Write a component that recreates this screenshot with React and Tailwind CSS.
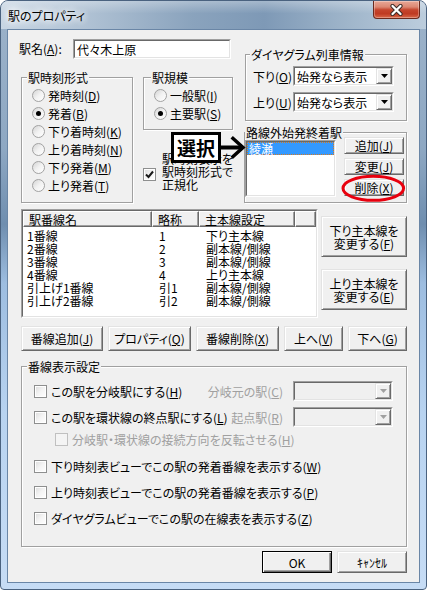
import React from "react";

const RAISED =
  "border border-t-[#e3e3e3] border-l-[#e3e3e3] border-r-[#696969] border-b-[#696969] shadow-[inset_1px_1px_0_#ffffff,inset_-1px_-1px_0_#a0a0a0]";
const DEFAULT_BTN =
  "border border-black shadow-[inset_1px_1px_0_#ffffff,inset_-1px_-1px_0_#696969,inset_-2px_-2px_0_#a0a0a0]";
const HDR =
  "flex items-center bg-[#f0f0f0] border border-t-white border-l-white border-r-[#696969] border-b-[#696969] shadow-[inset_-1px_-1px_0_#a0a0a0] whitespace-nowrap overflow-hidden";

function U({ children }) {
  return <span className="underline underline-offset-[1px]">{children}</span>;
}

function Button({ children, className = "", isDefault = false }) {
  return (
    <div
      className={`flex shrink-0 items-center justify-center bg-[#f0f0f0] text-center text-[12px] leading-[13px] whitespace-nowrap ${
        isDefault ? DEFAULT_BTN : RAISED
      } ${className}`}
    >
      <div>{children}</div>
    </div>
  );
}

function Sunken({ className = "", inner = "", children }) {
  return (
    <div
      className={`shrink-0 border border-t-[#a0a0a0] border-l-[#a0a0a0] border-r-white border-b-white ${className}`}
    >
      <div
        className={`h-full w-full border border-t-[#696969] border-l-[#696969] border-r-[#e3e3e3] border-b-[#e3e3e3] ${inner}`}
      >
        {children}
      </div>
    </div>
  );
}

function Combo({ text = "", disabled = false, className = "" }) {
  return (
    <Sunken
      className={`h-[20px] ${className}`}
      inner={`flex ${disabled ? "bg-[#f0f0f0]" : "bg-white"}`}
    >
      <div className="flex flex-1 items-center overflow-hidden whitespace-nowrap pl-[2px] text-[12px] leading-[13px]">
        {text}
      </div>
      <div className={`flex w-[16px] items-center justify-center bg-[#f0f0f0] ${RAISED}`}>
        <svg width="7" height="4" viewBox="0 0 7 4">
          <path d="M0 0H7L3.5 4Z" fill={disabled ? "#a0a0a0" : "#000000"} />
        </svg>
      </div>
    </Sunken>
  );
}

function Check({ checked = false, disabled = false }) {
  return (
    <div
      className={`flex h-[13px] w-[13px] shrink-0 items-center justify-center border ${
        disabled
          ? "border-[#c0c0c0] bg-[#f4f4f4]"
          : "border-[#8e8f8f] bg-linear-to-br from-[#dcdcdc] via-[#f4f4f4] to-white shadow-[inset_0_0_0_1px_#ffffff]"
      }`}
    >
      {checked && (
        <svg width="11" height="11" viewBox="0 0 11 11">
          <path d="M2 5.5L4.5 8L9 2.5" fill="none" stroke="#1a1a1a" strokeWidth="2" />
        </svg>
      )}
    </div>
  );
}

function Radio({ checked = false }) {
  return (
    <div className="flex h-[13px] w-[13px] shrink-0 items-center justify-center rounded-full border border-[#a2a2a2] bg-linear-to-br from-[#d4d4d4] via-[#f2f2f2] to-white">
      {checked && <div className="h-[5px] w-[5px] rounded-full bg-black" />}
    </div>
  );
}

function Group({ label, className = "", labelPos = "left-[5px]", children }) {
  return (
    <div
      className={`relative shrink-0 border border-[#a0a0a0] shadow-[inset_1px_1px_0_#ffffff,1px_1px_0_#ffffff] ${className}`}
    >
      <span
        className={`absolute -top-[7px] ${labelPos} whitespace-nowrap bg-[#f0f0f0] px-[1px] text-[12px] leading-[13px]`}
      >
        {label}
      </span>
      {children}
    </div>
  );
}

function RadioRow({ checked, children }) {
  return (
    <div className="flex h-[18px] items-center">
      <Radio checked={checked} />
      <span className="ml-[3px] whitespace-nowrap">{children}</span>
    </div>
  );
}

const rows = [
  ["1番線", "1", "下り主本線"],
  ["2番線", "2", "副本線/側線"],
  ["3番線", "3", "副本線/側線"],
  ["4番線", "4", "上り主本線"],
  ["引上げ1番線", "引1", "副本線/側線"],
  ["引上げ2番線", "引2", "副本線/側線"],
];

export default function App() {
  return (
    <div
      className={`h-[590px] w-[427px] bg-white font-['Noto_Sans_CJK_JP','Noto_Sans','Liberation_Sans',sans-serif] text-[12px] leading-[13px] text-black [font-feature-settings:'palt']`}
    >
      <div className="flex h-full w-full flex-col overflow-hidden rounded-t-[8px] rounded-b-[4px] border border-[#4a627f] bg-[linear-gradient(180deg,#9db3ca_0%,#8ea8c3_25%,#6f8eaf_38%,#9dbde0_48%,#b8d3f0_70%,#c6dcf5_100%)]">
        {/* title bar */}
        <div className="flex h-[28px] shrink-0 items-start justify-between bg-[linear-gradient(180deg,rgba(255,255,255,0.3)_0%,rgba(255,255,255,0)_45%),linear-gradient(90deg,#c8d6e4_0%,#b0c2d4_20%,#8aa3bd_45%,#7e99b6_62%,#a0b6cb_82%,#bccddd_100%)]">
          <div className="flex h-[28px] items-center pl-[7px] text-[12px] [text-shadow:0_0_6px_#ffffff,0_0_8px_#ffffff,0_0_10px_#ffffff]">
            駅のプロパティ
          </div>
          <div className="mr-[6px] flex h-[18px] w-[47px] items-center justify-center rounded-b-[4px] border border-t-0 border-[#6b2a1e] bg-[linear-gradient(180deg,#e8a897_0%,#dc8873_35%,#c5452d_52%,#bf3a22_75%,#d9694a_100%)] shadow-[inset_0_0_0_1px_rgba(255,255,255,0.3)]">
            <svg width="15" height="12" viewBox="0 0 15 12">
              <path d="M3.5 2L11.5 10M11.5 2L3.5 10" stroke="#3b2a26" strokeWidth="4.2" strokeLinecap="round" />
              <path d="M3.5 2L11.5 10M11.5 2L3.5 10" stroke="#ffffff" strokeWidth="2.3" strokeLinecap="round" />
            </svg>
          </div>
        </div>

        {/* client */}
        <div className="mx-[6px] shrink-0 border border-[#6a86a6]">
          <div className="relative flex h-[552px] w-[411px] flex-col bg-[#f0f0f0]">
            {/* top section */}
            <div className="flex pl-[11px] pt-[9px]">
              {/* left block */}
              <div className="flex w-[214px] flex-col">
                <div className="flex h-[20px] items-center">
                  <span className="w-[54px] pb-[2px] whitespace-nowrap">
                    駅名(<U>A</U>):
                  </span>
                  <Sunken className="h-[20px] w-[158px]" inner="flex items-center bg-white pl-[2px]">
                    代々木上原
                  </Sunken>
                </div>
                <div className="mt-[18px] flex">
                  <Group label="駅時刻形式" className="ml-[2px] h-[126px] w-[112px]">
                    <div className="flex flex-col pl-[10px] pt-[8px]">
                      <RadioRow>発時刻(<U>D</U>)</RadioRow>
                      <RadioRow checked>発着(<U>B</U>)</RadioRow>
                      <RadioRow>下り着時刻(<U>K</U>)</RadioRow>
                      <RadioRow>上り着時刻(<U>N</U>)</RadioRow>
                      <RadioRow>下り発着(<U>M</U>)</RadioRow>
                      <RadioRow>上り発着(<U>T</U>)</RadioRow>
                    </div>
                  </Group>
                  <div className="ml-[10px] flex flex-col">
                    <Group label="駅規模" labelPos="left-[7px]" className="h-[53px] w-[90px]">
                      <div className="flex flex-col pl-[10px] pt-[8px]">
                        <RadioRow>一般駅(<U>I</U>)</RadioRow>
                        <RadioRow checked>主要駅(<U>S</U>)</RadioRow>
                      </div>
                    </Group>
                    <div className="mt-[22px] flex items-center">
                      <Check checked />
                      <div className="ml-[6px] whitespace-nowrap pb-[5px] leading-[13px]">
                        駅時刻表示を
                        <br />
                        駅時刻形式で
                        <br />
                        正規化
                      </div>
                    </div>
                  </div>
                </div>
              </div>

              {/* right block */}
              <div className="ml-[11px] flex w-[163px] flex-col pt-[15px]">
                <Group label="ダイヤグラム列車情報" labelPos="left-[4px]" className="ml-[1px] h-[67px] w-[162px]">
                  <div className="flex flex-col pl-[7px] pt-[11px]">
                    <div className="flex h-[20px] items-center">
                      <span className="w-[40px] whitespace-nowrap">
                        下り(<U>O</U>)
                      </span>
                      <Combo text="始発なら表示" className="w-[101px]" />
                    </div>
                    <div className="mt-[6px] flex h-[20px] items-center">
                      <span className="w-[40px] whitespace-nowrap">
                        上り(<U>U</U>)
                      </span>
                      <Combo text="始発なら表示" className="w-[101px]" />
                    </div>
                  </div>
                </Group>
                <Group label="路線外始発終着駅" labelPos="left-[0px]" className="mt-[11px] h-[71px] w-[163px]">
                  <div className="flex items-start">
                    <Sunken className="mt-[7px] h-[57px] w-[91px]" inner="bg-white">
                      <div className="h-[13px] border border-dotted border-[#d47a22] bg-[#3399ff] pl-[1px] leading-[11px] text-white">
                        綾瀬
                      </div>
                    </Sunken>
                    <div className="ml-[8px] mt-[4px] flex flex-col gap-[4px]">
                      <Button className="h-[17px] w-[60px]">追加(<U>J</U>)</Button>
                      <Button className="h-[17px] w-[60px]">変更(<U>J</U>)</Button>
                      <Button className="h-[17px] w-[60px]">削除(<U>X</U>)</Button>
                    </div>
                  </div>
                </Group>
              </div>
            </div>

            {/* list section */}
            <div className="mt-[6px] flex pl-[13px]">
              <Sunken className="h-[109px] w-[297px]" inner="flex flex-col bg-white overflow-hidden">
                <div className="flex h-[16px] shrink-0">
                  <div className={`${HDR} w-[129px] pl-[5px]`}>駅番線名</div>
                  <div className={`${HDR} w-[47px] pl-[5px]`}>略称</div>
                  <div className={`${HDR} w-[96px] pl-[5px]`}>主本線設定</div>
                  <div className={`${HDR} flex-1`}></div>
                </div>
                <div className="flex flex-col pt-[2px]">
                  {rows.map((r) => (
                    <div key={r[0]} className="flex h-[13px] items-center whitespace-nowrap">
                      <div className="w-[129px] pl-[4px]">{r[0]}</div>
                      <div className="w-[47px] pl-[7px]">{r[1]}</div>
                      <div className="w-[96px] pl-[7px]">{r[2]}</div>
                    </div>
                  ))}
                </div>
              </Sunken>
              <div className="ml-[3px] flex flex-col pt-[7px]">
                <Button className="h-[41px] w-[86px]">
                  下り主本線を
                  <br />
                  変更する(<U>F</U>)
                </Button>
                <Button className="mt-[12px] h-[41px] w-[86px]">
                  上り主本線を
                  <br />
                  変更する(<U>E</U>)
                </Button>
              </div>
            </div>

            {/* button row */}
            <div className="mt-[8px] flex gap-[5px] pl-[13px]">
              <Button className="h-[25px] w-[82px]">番線追加(<U>J</U>)</Button>
              <Button className="h-[25px] w-[83px]">プロパティ(<U>Q</U>)</Button>
              <Button className="h-[25px] w-[83px]">番線削除(<U>X</U>)</Button>
              <Button className="h-[25px] w-[59px]">上へ(<U>V</U>)</Button>
              <Button className="h-[25px] w-[59px]">下へ(<U>G</U>)</Button>
            </div>

            {/* 番線表示設定 */}
            <Group label="番線表示設定" className="ml-[13px] mt-[15px] h-[181px] w-[386px]">
              <div className="flex flex-col pl-[12px] pt-[14px]">
                <div className="flex h-[20px] w-[359px] items-center">
                  <Check />
                  <span className="ml-[4px] whitespace-nowrap">
                    この駅を分岐駅にする(<U>H</U>)
                  </span>
                  <span className="ml-auto mr-[10px] whitespace-nowrap text-[#a0a0a0]">
                    分岐元の駅(<U>C</U>)
                  </span>
                  <Combo disabled className="w-[100px]" />
                </div>
                <div className="mt-[6px] flex h-[20px] w-[359px] items-center">
                  <Check />
                  <span className="ml-[4px] whitespace-nowrap">
                    この駅を環状線の終点駅にする(<U>L</U>)
                  </span>
                  <span className="ml-auto mr-[10px] whitespace-nowrap text-[#a0a0a0]">
                    起点駅(<U>R</U>)
                  </span>
                  <Combo disabled className="w-[100px]" />
                </div>
                <div className="mt-[5px] flex h-[15px] items-center pl-[21px]">
                  <Check disabled />
                  <span className="ml-[4px] whitespace-nowrap text-[#a0a0a0]">
                    分岐駅・環状線の接続方向を反転させる(<U>H</U>)
                  </span>
                </div>
                <div className="mt-[12px] flex h-[15px] items-center">
                  <Check />
                  <span className="ml-[4px] whitespace-nowrap">
                    下り時刻表ビューでこの駅の発着番線を表示する(<U>W</U>)
                  </span>
                </div>
                <div className="mt-[11px] flex h-[15px] items-center">
                  <Check />
                  <span className="ml-[4px] whitespace-nowrap">
                    上り時刻表ビューでこの駅の発着番線を表示する(<U>P</U>)
                  </span>
                </div>
                <div className="mt-[11px] flex h-[15px] items-center">
                  <Check />
                  <span className="ml-[4px] whitespace-nowrap">
                    ダイヤグラムビューでこの駅の在線表を表示する(<U>Z</U>)
                  </span>
                </div>
              </div>
            </Group>

            {/* OK / Cancel */}
            <div className="mt-[4px] flex justify-end gap-[5px] pr-[12px]">
              <Button isDefault className="h-[22px] w-[70px]">
                OK
              </Button>
              <Button className="h-[22px] w-[70px]">ｷｬﾝｾﾙ</Button>
            </div>

            {/* annotations */}
            <div className="absolute left-[163px] top-[102px] flex h-[31px] w-[50px] items-center justify-center border-[3px] border-black bg-white text-[19px] font-bold leading-none">
              選択
            </div>
            <svg className="absolute left-[213px] top-[105px]" width="26" height="26" viewBox="0 0 26 26">
              <path d="M0 12.5H21" stroke="#000000" strokeWidth="4" />
              <path d="M10.7 2.3L22 12.5L10.7 22.7" fill="none" stroke="#000000" strokeWidth="3.5" />
            </svg>
            <svg className="absolute left-[333px] top-[144px]" width="66" height="29" viewBox="0 0 66 29">
              <ellipse cx="32.3" cy="14.3" rx="30.3" ry="12" fill="none" stroke="#e8000e" strokeWidth="3" />
            </svg>
          </div>
        </div>
      </div>
    </div>
  );
}
